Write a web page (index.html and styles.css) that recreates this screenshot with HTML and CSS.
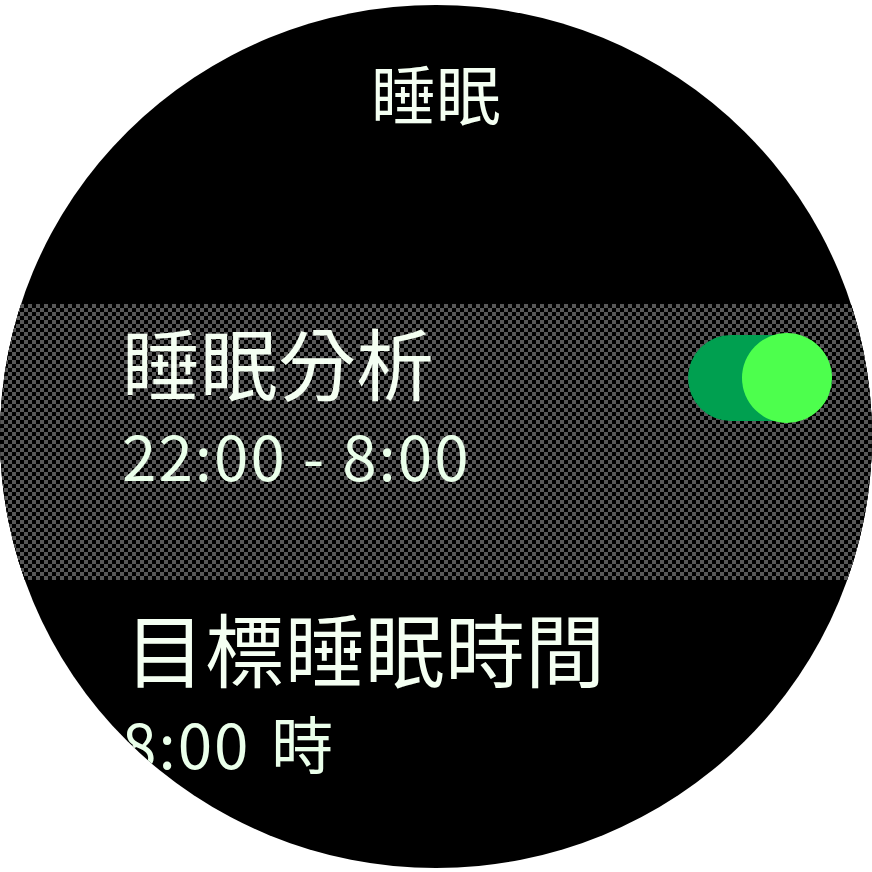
FILE: index.html
```html
<!DOCTYPE html>
<html lang="zh-Hant">
<head>
<meta charset="utf-8">
<link rel="stylesheet" href="styles.css">
</head>
<body>
<div class="screen">
  <div class="header">
    <div class="title">睡眠</div>
  </div>
  <div class="item selected">
    <div class="texts">
      <div class="label">睡眠分析</div>
      <div class="value">22:00 - 8:00</div>
    </div>
    <div class="toggle"><div class="knob"></div></div>
  </div>
  <div class="item plain">
    <div class="texts">
      <div class="label">目標睡眠時間</div>
      <div class="value">8:00 時</div>
    </div>
  </div>
</div>
</body>
</html>
```

FILE: styles.css
```css
html, body {
  margin: 0;
  padding: 0;
  background: #ffffff;
}
body {
  width: 872px;
  height: 872px;
  overflow: hidden;
  font-family: "Noto Sans CJK TC", "Noto Sans", sans-serif;
}
.screen {
  margin-top: 5px;
  width: 872px;
  height: 863px;
  border-radius: 50%;
  background: #000;
  overflow: hidden;
  display: flex;
  flex-direction: column;
}
.header {
  height: 299px;
  flex: none;
  display: flex;
  justify-content: center;
}
.title {
  margin-top: 52px;
  font-size: 65px;
  line-height: 1.1;
  color: #f4fff2;
}
.item {
  flex: none;
  display: flex;
  align-items: flex-start;
  padding-left: 122px;
}
.selected {
  height: 276px;
  background-color: #000;
  background-image: repeating-conic-gradient(#585858 0 25%, #000 0 50%);
  background-size: 8px 8px;
}
.texts {
  display: flex;
  flex-direction: column;
}
.label {
  font-size: 78px;
  line-height: 1.2;
  color: #f4fff2;
  white-space: nowrap;
}
.value {
  font-size: 62px;
  line-height: 1.2;
  letter-spacing: 2px;
  color: #eaffea;
  white-space: nowrap;
}
.selected .label {
  margin-top: 11px;
}
.selected .value {
  margin-top: 8px;
}
.toggle {
  margin-left: auto;
  margin-right: 40px;
  margin-top: 31px;
  width: 144px;
  height: 86px;
  border-radius: 43px;
  background: #00a050;
  display: flex;
  justify-content: flex-end;
  align-items: center;
}
.knob {
  width: 90px;
  height: 90px;
  border-radius: 50%;
  background: #4dff4d;
  flex: none;
}
.plain .label {
  font-size: 80px;
  margin-top: 18px;
  padding-left: 3px;
}
.plain .value {
  margin-top: 11px;
  word-spacing: 5px;
}
```
